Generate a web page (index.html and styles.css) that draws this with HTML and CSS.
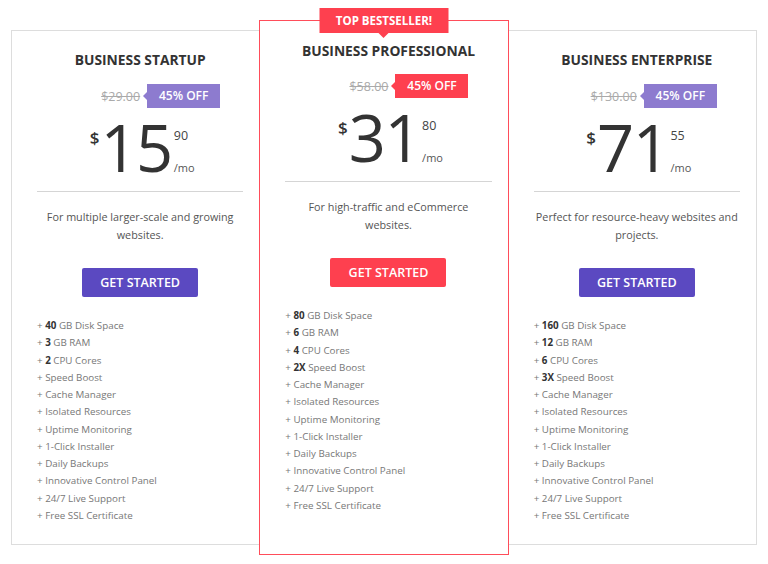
FILE: index.html
```html
<!DOCTYPE html>
<html lang="en">
<head>
  <meta charset="UTF-8" />
  <meta name="viewport" content="width=device-width, initial-scale=1.0"/>
  <title>Hosting Plans</title>
  <link rel="stylesheet" href="styles.css">
</head>
<body>
  <div class="pricing">
    <!-- Startup plan -->
    <div class="plan">
      <h3 class="plan-name">BUSINESS STARTUP</h3>
      <div class="discount">
        <span class="old-price">$29.00</span>
        <span class="off">45% OFF</span>
      </div>
      <div class="price">
        <span class="currency">$</span>
        <span class="amount">15</span>
        <span class="cents">90<small>/mo</small></span>
      </div>
      <p class="desc">For multiple larger-scale and growing websites.</p>
      <a href="#" class="btn">GET STARTED</a>
      <ul class="features">
        <li>+ <b>40</b> GB Disk Space</li>
        <li>+ <b>3</b> GB RAM</li>
        <li>+ <b>2</b> CPU Cores</li>
        <li>+ Speed Boost</li>
        <li>+ Cache Manager</li>
        <li>+ Isolated Resources</li>
        <li>+ Uptime Monitoring</li>
        <li>+ 1-Click Installer</li>
        <li>+ Daily Backups</li>
        <li>+ Innovative Control Panel</li>
        <li>+ 24/7 Live Support</li>
        <li>+ Free SSL Certificate</li>
      </ul>
    </div>

    <!-- Professional plan (highlighted) -->
    <div class="plan featured">
      <span class="ribbon">TOP BESTSELLER!</span>
      <h3 class="plan-name">BUSINESS PROFESSIONAL</h3>
      <div class="discount">
        <span class="old-price">$58.00</span>
        <span class="off">45% OFF</span>
      </div>
      <div class="price">
        <span class="currency">$</span>
        <span class="amount">31</span>
        <span class="cents">80<small>/mo</small></span>
      </div>
      <p class="desc">For high-traffic and eCommerce websites.</p>
      <a href="#" class="btn">GET STARTED</a>
      <ul class="features">
        <li>+ <b>80</b> GB Disk Space</li>
        <li>+ <b>6</b> GB RAM</li>
        <li>+ <b>4</b> CPU Cores</li>
        <li>+ <b>2X</b> Speed Boost</li>
        <li>+ Cache Manager</li>
        <li>+ Isolated Resources</li>
        <li>+ Uptime Monitoring</li>
        <li>+ 1-Click Installer</li>
        <li>+ Daily Backups</li>
        <li>+ Innovative Control Panel</li>
        <li>+ 24/7 Live Support</li>
        <li>+ Free SSL Certificate</li>
      </ul>
    </div>

    <!-- Enterprise plan -->
    <div class="plan">
      <h3 class="plan-name">BUSINESS ENTERPRISE</h3>
      <div class="discount">
        <span class="old-price">$130.00</span>
        <span class="off">45% OFF</span>
      </div>
      <div class="price">
        <span class="currency">$</span>
        <span class="amount">71</span>
        <span class="cents">55<small>/mo</small></span>
      </div>
      <p class="desc">Perfect for resource-heavy websites and projects.</p>
      <a href="#" class="btn">GET STARTED</a>
      <ul class="features">
        <li>+ <b>160</b> GB Disk Space</li>
        <li>+ <b>12</b> GB RAM</li>
        <li>+ <b>6</b> CPU Cores</li>
        <li>+ <b>3X</b> Speed Boost</li>
        <li>+ Cache Manager</li>
        <li>+ Isolated Resources</li>
        <li>+ Uptime Monitoring</li>
        <li>+ 1-Click Installer</li>
        <li>+ Daily Backups</li>
        <li>+ Innovative Control Panel</li>
        <li>+ 24/7 Live Support</li>
        <li>+ Free SSL Certificate</li>
      </ul>
    </div>
  </div>
</body>
</html>
```

FILE: styles.css
```css
body {
  margin: 0;
  font-family: "Open Sans", "Noto Sans", sans-serif;
  background: #fff;
  color: #333;
}

.pricing {
  display: flex;
  align-items: flex-start;
  padding: 30px 11px 0;
}

/* Plan card */
.plan {
  flex: 1;
  position: relative;
  background: #fff;
  border: 1px solid #ddd;
  padding: 19px 16px 20px 25px;
}

/* middle card sits 10px higher and 10px lower than its neighbours */
.plan.featured {
  margin: -10px -1px 0;
  padding-bottom: 40px;
  border-color: #ff4d5a;
  z-index: 1;
}

.ribbon {
  position: absolute;
  top: -13px;
  left: 50%;
  transform: translateX(-50%);
  width: 129px;
  height: 25px;
  line-height: 25px;
  background: #fe404f;
  color: #fff;
  font-size: 11.5px;
  font-weight: 700;
  text-align: center;
}

.ribbon::after {
  content: "";
  position: absolute;
  left: 50%;
  bottom: -5px;
  margin-left: -5px;
  border-left: 5px solid transparent;
  border-right: 5px solid transparent;
  border-top: 5px solid #fe404f;
}

.plan-name {
  margin: 0;
  font-size: 13.8px;
  line-height: 20px;
  font-weight: 700;
  text-align: center;
  color: #333;
}

.featured .plan-name {
  line-height: 22px;
  margin-bottom: -2px;
}

/* Old price + discount badge */
.discount {
  display: grid;
  grid-template-columns: 1fr 1fr;
  align-items: center;
  margin-top: 14px;
  height: 24px;
}

.old-price {
  text-align: right;
  font-size: 12.5px;
  color: #aaa;
  text-decoration: line-through;
}

.off {
  position: relative;
  justify-self: start;
  margin-left: 7px;
  width: 73px;
  height: 24px;
  line-height: 24px;
  background: #8d7bcf;
  color: #fff;
  font-size: 12px;
  font-weight: 600;
  text-align: center;
}

.featured .off {
  background: #fe404f;
}

.off::before {
  content: "";
  position: absolute;
  left: -4px;
  top: 50%;
  margin-top: -4px;
  border-top: 4px solid transparent;
  border-bottom: 4px solid transparent;
  border-right: 4px solid #8d7bcf;
}

.featured .off::before {
  border-right-color: #fe404f;
}

/* Big price */
.price {
  display: flex;
  justify-content: center;
  align-items: flex-start;
  height: 66px;
  margin-top: 6px;
  padding: 0 0 11px 4px;
  border-bottom: 1px solid #d5d5d5;
  color: #333;
}

.currency {
  font-size: 17px;
  font-weight: 600;
  line-height: 1;
  margin-top: 15px;
  margin-right: 1px;
}

.amount {
  font-size: 65px;
  line-height: 66px;
  letter-spacing: -1.5px;
}

.cents {
  display: flex;
  flex-direction: column;
  font-size: 12.5px;
  line-height: 1;
  margin-top: 16px;
  margin-left: 2px;
  color: #444;
}

.cents small {
  font-size: 11px;
  margin-top: 19px;
  color: #555;
}

.desc {
  margin: 16px 0 0;
  font-size: 10.8px;
  line-height: 17.5px;
  color: #555;
  text-align: center;
}

.btn {
  display: block;
  width: 116px;
  height: 29px;
  line-height: 29px;
  margin: 25px auto 0;
  background: #5b49c1;
  border-radius: 2px;
  color: #fff;
  font-size: 12.5px;
  font-weight: 600;
  text-align: center;
  text-decoration: none;
}

.featured .btn {
  background: #fe404f;
}

.features {
  list-style: none;
  margin: 20px 0 0;
  padding: 0;
  font-size: 9.8px;
  line-height: 17.27px;
  color: #777;
}

.features b {
  color: #333;
  font-weight: 700;
}
```
